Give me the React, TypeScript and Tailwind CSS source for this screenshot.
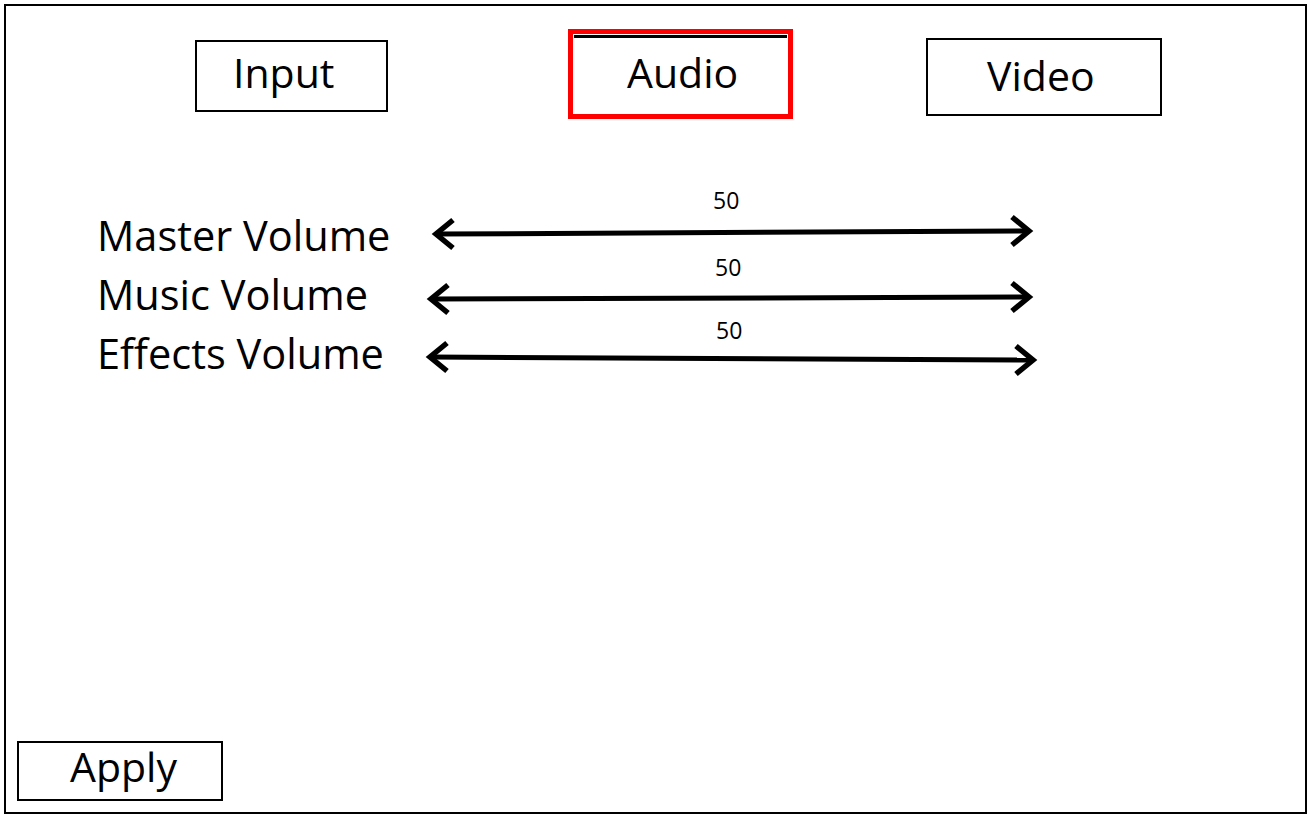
import React from "react";

function Arrow({ x1, y1, x2, y2 }: { x1: number; y1: number; x2: number; y2: number }) {
  const back = 17;
  const half = 14;
  const inset = 4;
  const lx = x1 + inset;
  const rx = x2 - inset;
  return (
    <svg width="630" height="32" overflow="visible" className="block overflow-visible">
      <line x1={lx} y1={y1} x2={rx} y2={y2} stroke="#000" strokeWidth="5" />
      <polyline
        points={`${lx + back},${y1 - half} ${lx},${y1} ${lx + back},${y1 + half}`}
        fill="none"
        stroke="#000"
        strokeWidth="5.5"
        strokeLinejoin="miter"
      />
      <polyline
        points={`${rx - back},${y2 - half} ${rx},${y2} ${rx - back},${y2 + half}`}
        fill="none"
        stroke="#000"
        strokeWidth="5.5"
        strokeLinejoin="miter"
      />
    </svg>
  );
}

export default function App() {
  return (
    <div className="w-[1310px] h-[816px] bg-white pt-[4px] pl-[4px] font-['Open_Sans',sans-serif] text-black">
      <div className="w-[1303px] h-[810px] border-2 border-black flex flex-col">
        {/* Tabs */}
        <div className="flex items-start h-[112px]">
          <div className="ml-[189px] mt-[34px] w-[193px] h-[72px] border-2 border-black pl-[36px] pt-[10px] text-[41px] leading-[41px]">
            Input
          </div>
          <div className="ml-[180px] mt-[23px] w-[225px] h-[90px] border-[5px] border-[#ff0000]">
            <div className="mt-[1px] mx-[1px] h-[76px] border-t-[3px] border-black pl-[53px] pt-[14px] text-[41px] leading-[41px]">
              Audio
            </div>
          </div>
          <div className="ml-[133px] mt-[32px] w-[236px] h-[78px] border-2 border-black pl-[59px] pt-[15px] text-[41px] leading-[41px]">
            Video
          </div>
        </div>

        {/* Volume rows */}
        <div className="mt-[67px] flex flex-col">
          <div className="flex h-[59px]">
            <div className="ml-[91px] w-[323px] pt-[30px] text-[41.5px] leading-[41px] whitespace-nowrap">Master Volume</div>
            <div className="flex flex-col">
              <div className="pt-[4px] pl-[293px] text-[23px] leading-[23px]">50</div>
              <Arrow x1={12} y1={22} x2={613} y2={19} />
            </div>
          </div>
          <div className="flex h-[59px]">
            <div className="ml-[91px] w-[323px] pt-[30px] text-[41.5px] leading-[41px] whitespace-nowrap">Music Volume</div>
            <div className="flex flex-col">
              <div className="pt-[12px] pl-[295px] text-[23px] leading-[23px]">50</div>
              <Arrow x1={7} y1={20} x2={613} y2={18} />
            </div>
          </div>
          <div className="flex h-[59px]">
            <div className="ml-[91px] w-[323px] pt-[30px] text-[41.5px] leading-[41px] whitespace-nowrap">Effects Volume</div>
            <div className="flex flex-col">
              <div className="pt-[16px] pl-[296px] text-[23px] leading-[23px]">50</div>
              <Arrow x1={6} y1={15} x2={617} y2={18} />
            </div>
          </div>
        </div>

        <div className="flex-1" />

        {/* Apply */}
        <div className="ml-[11px] mb-[11px] w-[206px] h-[60px] border-2 border-black pl-[51px] pt-[3px] text-[41px] leading-[41px]">
          Apply
        </div>
      </div>
    </div>
  );
}
